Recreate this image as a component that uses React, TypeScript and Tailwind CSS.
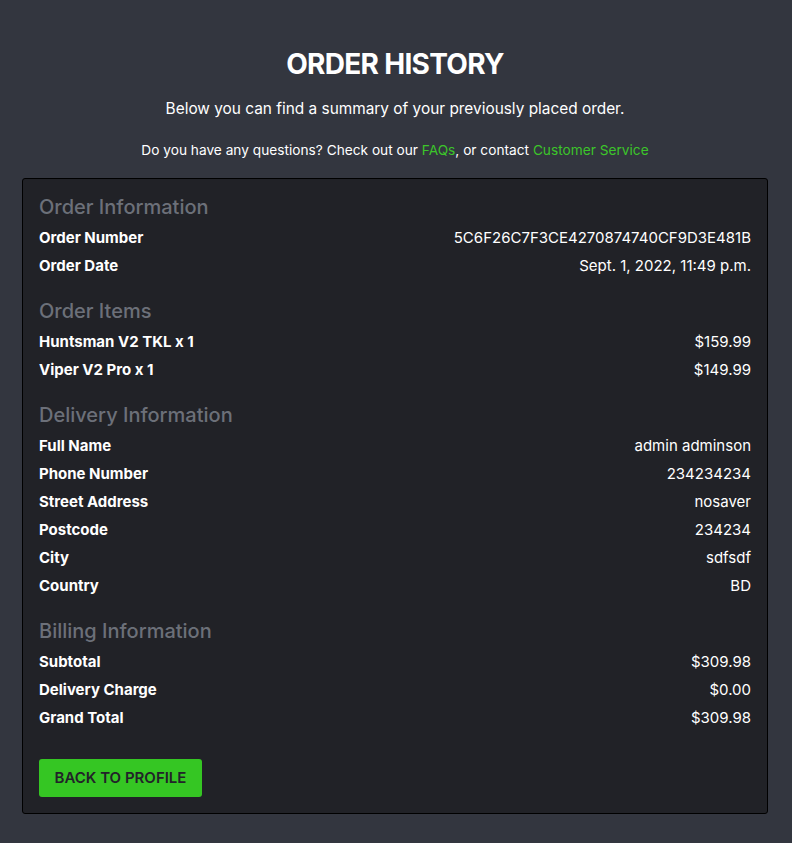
import React from 'react';

type Row = { label: string; value: string };

const sections: { title: string; rows: Row[] }[] = [
  {
    title: 'Order Information',
    rows: [
      { label: 'Order Number', value: '5C6F26C7F3CE4270874740CF9D3E481B' },
      { label: 'Order Date', value: 'Sept. 1, 2022, 11:49 p.m.' },
    ],
  },
  {
    title: 'Order Items',
    rows: [
      { label: 'Huntsman V2 TKL x 1', value: '$159.99' },
      { label: 'Viper V2 Pro x 1', value: '$149.99' },
    ],
  },
  {
    title: 'Delivery Information',
    rows: [
      { label: 'Full Name', value: 'admin adminson' },
      { label: 'Phone Number', value: '234234234' },
      { label: 'Street Address', value: 'nosaver' },
      { label: 'Postcode', value: '234234' },
      { label: 'City', value: 'sdfsdf' },
      { label: 'Country', value: 'BD' },
    ],
  },
  {
    title: 'Billing Information',
    rows: [
      { label: 'Subtotal', value: '$309.98' },
      { label: 'Delivery Charge', value: '$0.00' },
      { label: 'Grand Total', value: '$309.98' },
    ],
  },
];

export default function App() {
  return (
    <div className="min-h-[843px] bg-[#33363f] pl-[22px] pr-[24px] pt-[46px] pb-[30px] text-white font-['Inter','Noto_Sans',sans-serif]">
      <h1 className="text-center text-[28px] leading-[36px] font-bold tracking-tight">ORDER HISTORY</h1>
      <p className="mt-[15px] text-center text-[15.4px] leading-[24px]">
        Below you can find a summary of your previously placed order.
      </p>
      <p className="mt-[19px] text-center text-[13.7px] leading-[20px]">
        Do you have any questions? Check out our{' '}
        <a href="#" className="text-[#3cc52a]">FAQs</a>, or contact{' '}
        <a href="#" className="text-[#3cc52a]">Customer Service</a>
      </p>

      <div className="mt-[18px] rounded-[3px] border border-black bg-[#212227] px-4 pt-[14px] pb-4">
        {sections.map((s, i) => (
          <div key={s.title} className={i > 0 ? 'mt-[17px]' : ''}>
            <h2 className="mb-[3px] text-[20px] leading-[28px] font-medium text-[#6c7079]">{s.title}</h2>
            {s.rows.map((r) => (
              <div key={r.label} className="flex items-center justify-between text-[15px] leading-[28px]">
                <span className="font-bold">{r.label}</span>
                <span>{r.value}</span>
              </div>
            ))}
          </div>
        ))}

        <button
          type="button"
          className="mt-[27px] h-[38px] w-[163px] rounded-[3px] bg-[#35c623] text-[15px] font-semibold text-[#222329]"
        >
          BACK TO PROFILE
        </button>
      </div>
    </div>
  );
}
